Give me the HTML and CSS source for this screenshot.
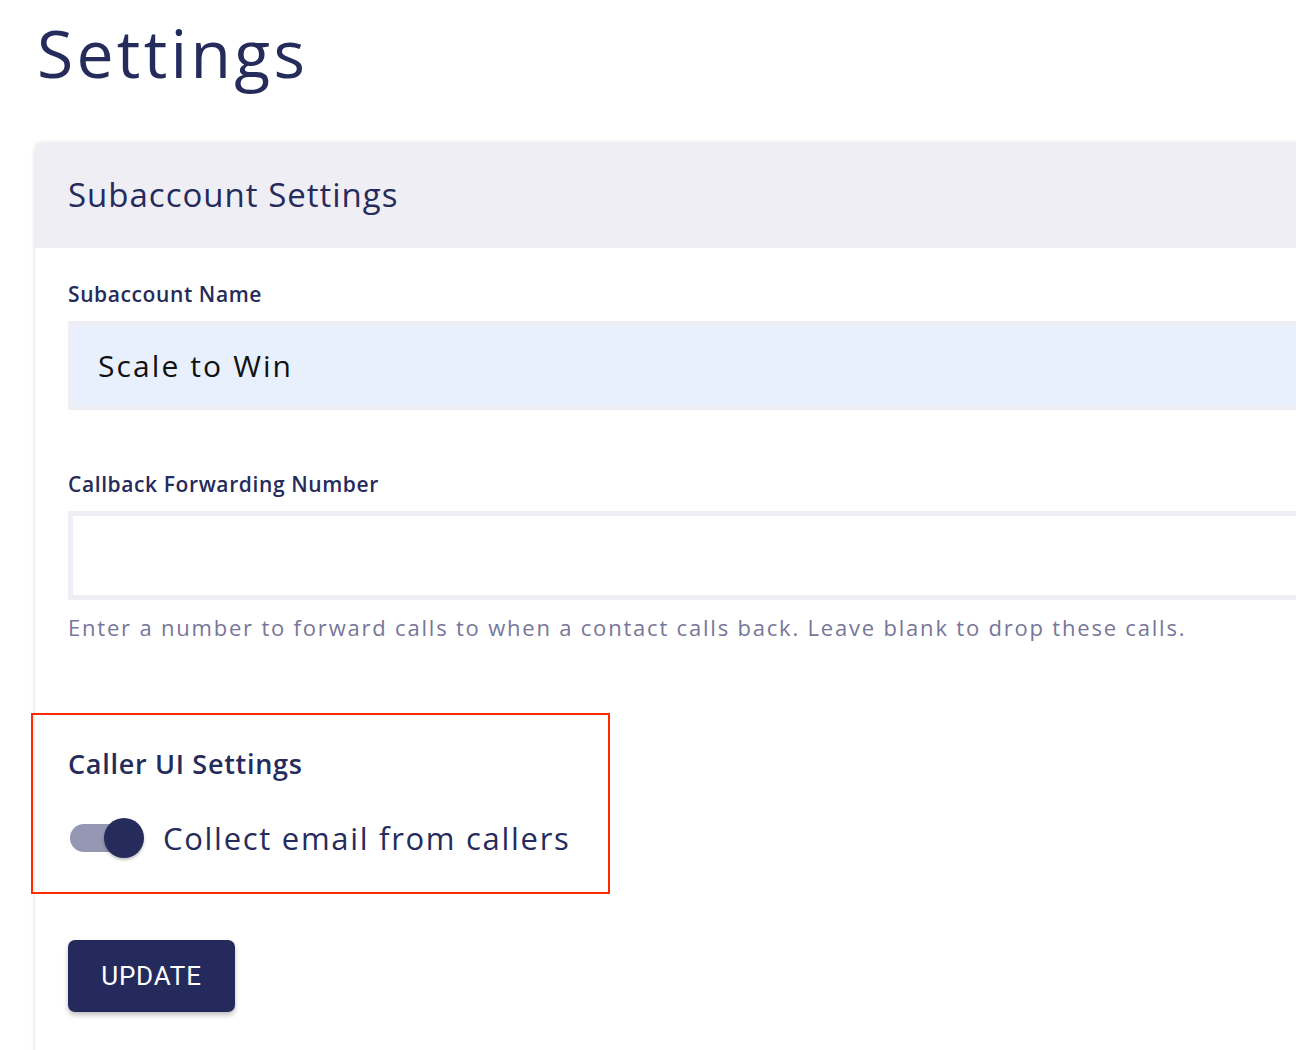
FILE: index.html
```html
<!DOCTYPE html>
<html>
<head>
<meta charset="utf-8">
<link rel="stylesheet" href="styles.css">
</head>
<body>
<div class="page">
  <h1 class="title">Settings</h1>
  <div class="card">
    <div class="card-header">Subaccount Settings</div>
    <div class="card-body">
      <label class="label">Subaccount Name</label>
      <div class="input filled">Scale to Win</div>
      <label class="label label-2">Callback Forwarding Number</label>
      <div class="input"></div>
      <div class="helper">Enter a number to forward calls to when a contact calls back. Leave blank to drop these calls.</div>
      <div class="highlight">
        <div class="section-title">Caller UI Settings</div>
        <div class="toggle-row">
          <span class="toggle"><span class="thumb"></span></span>
          <span class="toggle-label">Collect email from callers</span>
        </div>
      </div>
      <button class="btn">UPDATE</button>
    </div>
  </div>
</div>
</body>
</html>
```
FILE: styles.css
```css
html, body {
  margin: 0;
  padding: 0;
  background: #ffffff;
  overflow: hidden;
}
body {
  font-family: "Open Sans", "DejaVu Sans", sans-serif;
  color: #252b5b;
  width: 1296px;
  height: 1050px;
}
.page {
  padding-left: 35px;
}
.title {
  margin: 0;
  height: 142px;
  padding-left: 2px;
  font-size: 66px;
  font-weight: 400;
  line-height: 104px;
  letter-spacing: 3.3px;
  color: #252b5b;
  box-sizing: border-box;
}
.card {
  width: 1400px;
  border-radius: 8px 0 0 0;
  background: #fff;
  box-shadow: 0 1px 4px rgba(30, 30, 60, 0.18);
  height: 920px;
}
.card-header {
  height: 106px;
  background: #efeef5;
  border-radius: 8px 0 0 0;
  padding-left: 33px;
  font-size: 33px;
  line-height: 106px;
  letter-spacing: 1px;
  color: #252b5b;
}
.card-body {
  padding: 32px 33px 0 33px;
}
.label {
  display: block;
  font-size: 21px;
  font-weight: 600;
  line-height: 28px;
  height: 28px;
  margin-bottom: 13px;
  color: #252b5b;
  letter-spacing: 0.6px;
}
.label-2 {
  margin-top: 60px;
}
.input {
  box-sizing: border-box;
  height: 89px;
  border: 5px solid #efeef5;
  background: #fff;
  padding-left: 25px;
  font-size: 30px;
  line-height: 79px;
  letter-spacing: 2.1px;
  color: #111;
}
.input.filled {
  background: #e8f0fe;
}
.helper {
  margin-top: 12px;
  font-size: 22px;
  line-height: 30px;
  letter-spacing: 1.8px;
  color: #77769a;
}
.highlight {
  margin-top: 71px;
  margin-left: -37px;
  width: 579px;
  box-sizing: border-box;
  border: 2px solid #ff2a00;
  padding: 31px 0 32px 35px;
}
.section-title {
  font-size: 27px;
  font-weight: 600;
  line-height: 36px;
  height: 36px;
  letter-spacing: 0.7px;
}
.toggle-row {
  margin-top: 34px;
  height: 44px;
  display: flex;
  align-items: center;
}
.toggle {
  position: relative;
  width: 72px;
  height: 28px;
  margin-left: 2px;
  border-radius: 14px;
  background: #9597b2;
  flex: none;
}
.thumb {
  position: absolute;
  left: 34px;
  top: -6px;
  width: 40px;
  height: 40px;
  border-radius: 50%;
  background: #252b5b;
  box-shadow: 0 2px 3px rgba(0, 0, 0, 0.25);
}
.toggle-label {
  margin-left: 21px;
  font-size: 31px;
  line-height: 44px;
  letter-spacing: 1.7px;
  white-space: nowrap;
}
.btn {
  display: block;
  margin-top: 46px;
  width: 167px;
  height: 72px;
  border: none;
  border-radius: 7px;
  background: #242a5c;
  color: #fff;
  font-family: Roboto, "Open Sans", sans-serif;
  font-size: 26px;
  letter-spacing: 0.8px;
  box-shadow: 0 3px 5px rgba(0, 0, 0, 0.25);
}
```
